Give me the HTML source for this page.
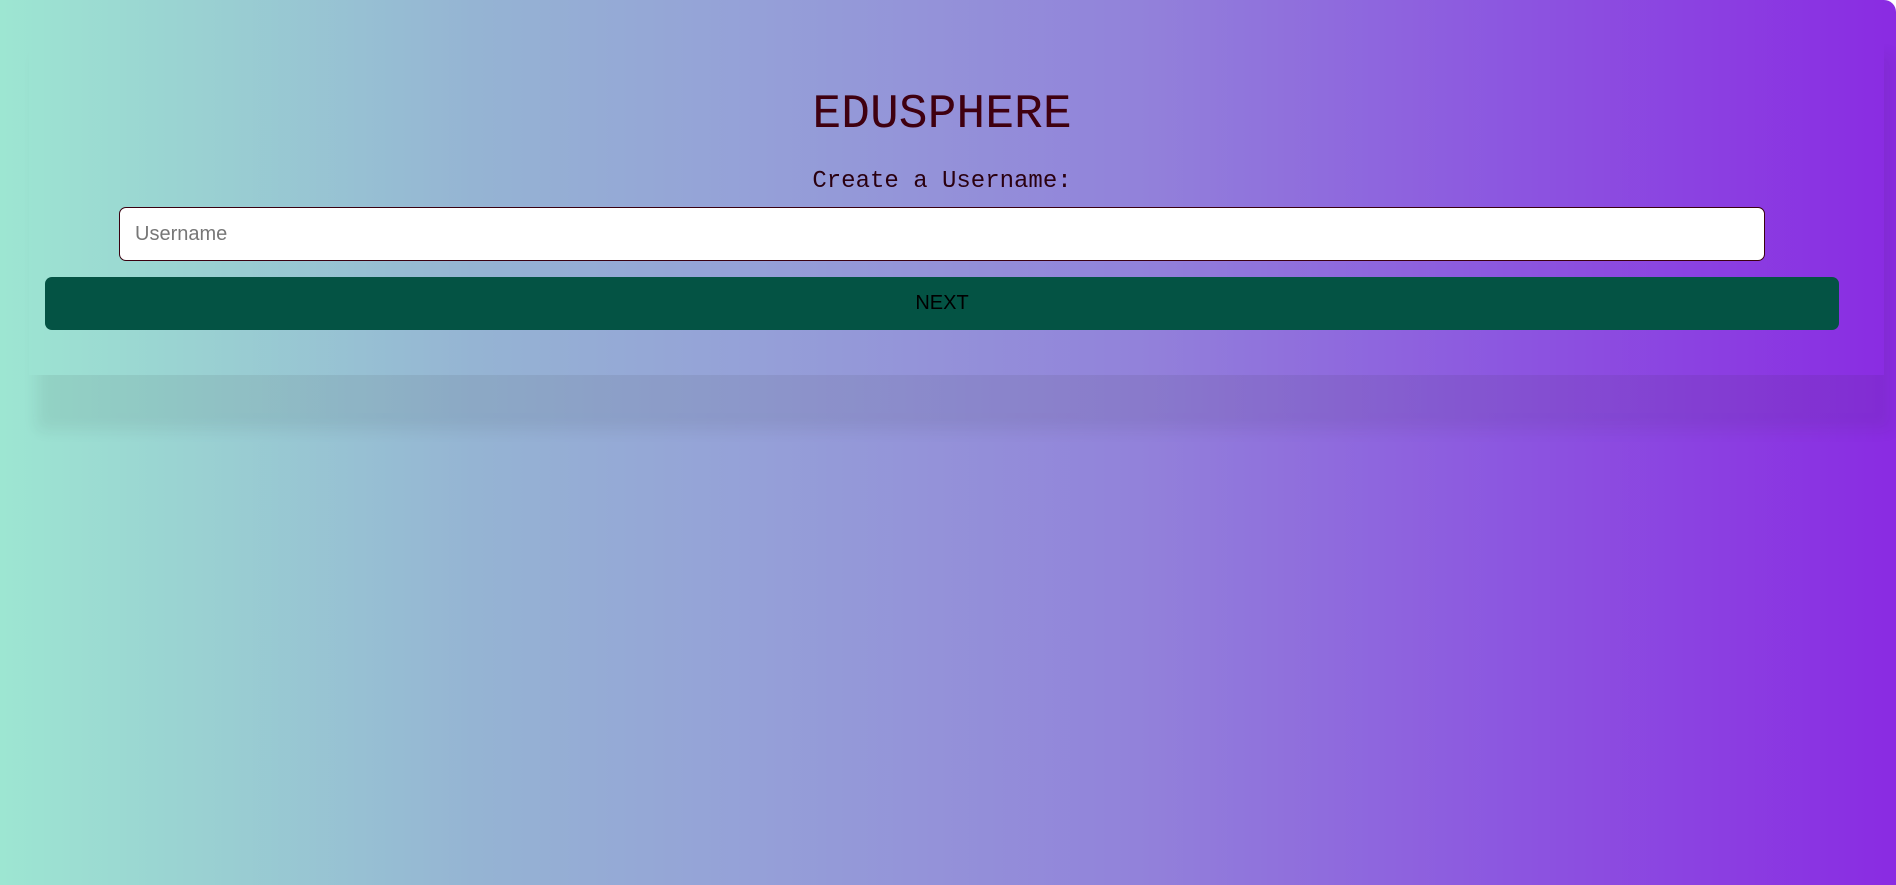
<!DOCTYPE html>
<html><head><meta charset="utf-8"><style>
html,body{margin:0;padding:0;width:1896px;height:885px;overflow:hidden;background:#fff}
.bg{position:absolute;left:0;top:0;width:1896px;height:885px;border-top-right-radius:12px;background:linear-gradient(to right,#9de6d2 0%,#95b4d3 25%,#95a0d8 40%,#9282da 60%,#8c55e0 80%,#8a2be2 100%);overflow:hidden}
.card{position:absolute;left:29px;top:0;width:1855px;height:375px;box-shadow:8px 55px 14px rgba(40,40,40,0.08)}
h1{position:absolute;left:0;width:1884px;top:88px;margin:0;text-align:center;font:48px "Liberation Mono",monospace;color:#3f0010}
.lbl{position:absolute;left:0;width:1884px;top:168px;text-align:center;font:24px "Liberation Mono",monospace;color:#2a0010}
.inp{position:absolute;left:119px;top:207px;width:1646px;height:54px;background:#fff;border:1px solid #3a0010;border-radius:7px;box-sizing:border-box;font-family:"Liberation Sans",sans-serif;font-size:20px;color:#777;padding-left:15px;line-height:52px}
.btn{position:absolute;left:45px;top:277px;width:1794px;height:53px;background:#045344;border-radius:7px;text-align:center;font-family:"Liberation Sans",sans-serif;font-size:20px;line-height:53px;color:#000}
</style></head><body>
<div class="bg">
<div class="card"></div>
<h1>EDUSPHERE</h1>
<div class="lbl">Create a Username:</div>
<div class="inp">Username</div>
<div class="btn">NEXT</div>
</div>
</body></html>
